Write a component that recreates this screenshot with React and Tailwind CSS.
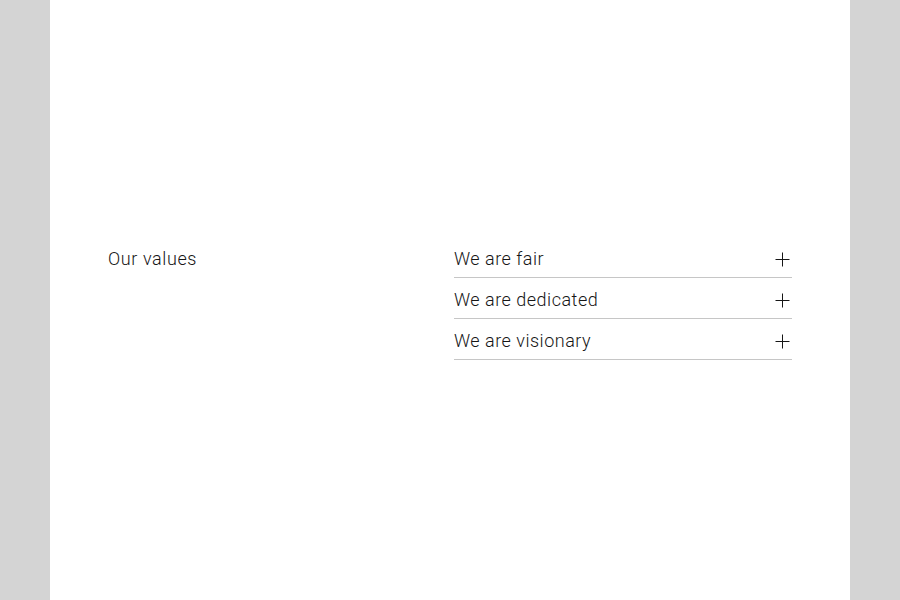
import React, { useState } from "react";

const values = [
  { title: "We are fair", body: "We treat everyone with respect and openness." },
  { title: "We are dedicated", body: "We put our heart into every project we take on." },
  { title: "We are visionary", body: "We look ahead and build for what comes next." },
];

function Plus() {
  return (
    <svg width="16" height="16" viewBox="0 0 16 16" className="shrink-0">
      <path d="M8.5 1.5v14M1.5 8.5h14" stroke="#161616" strokeWidth="1" fill="none" />
    </svg>
  );
}

export default function App() {
  const [open, setOpen] = useState(null);

  return (
    <div className="bg-[#d4d4d4] min-h-screen" style={{ fontFamily: "Roboto, 'Noto Sans', sans-serif" }}>
      <div className="mx-[50px] bg-white h-[600px] flex items-center px-[58px] pb-1 text-[#161616]">
        <div className="grid grid-cols-2 gap-2 w-full">
          <h2 className="text-[18px] leading-6 font-light tracking-[0.6px] pt-[10px]">Our values</h2>
          <ul>
            {values.map((v, i) => (
              <li key={v.title} className="border-b border-[#c6c6c6]">
                <button
                  className="w-full flex items-center justify-between pt-[10px] pb-[6px] pr-[2px] text-left"
                  onClick={() => setOpen(open === i ? null : i)}
                >
                  <span className="text-[18px] leading-6 font-light tracking-[0.5px]">{v.title}</span>
                  <Plus />
                </button>
                {open === i && <p className="text-sm pb-3">{v.body}</p>}
              </li>
            ))}
          </ul>
        </div>
      </div>
    </div>
  );
}
